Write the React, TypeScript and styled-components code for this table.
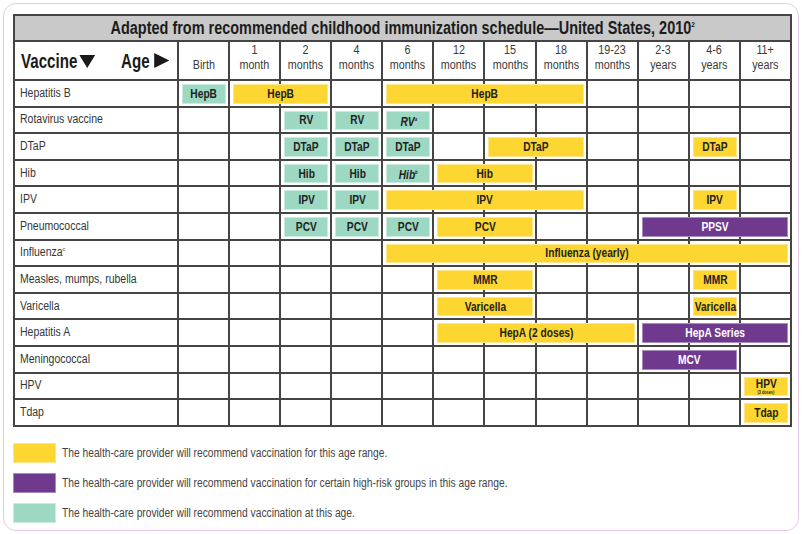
import styled, { createGlobalStyle } from "styled-components";

const GlobalStyle = createGlobalStyle`
  html, body {
    margin: 0;
    padding: 0;
    background: #ffffff;
  }
`;

type Kind = "range" | "risk" | "age";

type Bar = {
  col: number;
  span: number;
  kind: Kind;
  text: string;
  italic?: boolean;
  sup?: string;
  note?: string;
};

type VaccineRow = {
  label: string;
  sup?: string;
  bars: Bar[];
};

const ages: [string, string][] = [
  ["", "Birth"],
  ["1", "month"],
  ["2", "months"],
  ["4", "months"],
  ["6", "months"],
  ["12", "months"],
  ["15", "months"],
  ["18", "months"],
  ["19-23", "months"],
  ["2-3", "years"],
  ["4-6", "years"],
  ["11+", "years"],
];

const rows: VaccineRow[] = [
  {
    label: "Hepatitis B",
    bars: [
      { col: 0, span: 1, kind: "age", text: "HepB" },
      { col: 1, span: 2, kind: "range", text: "HepB" },
      { col: 4, span: 4, kind: "range", text: "HepB" },
    ],
  },
  {
    label: "Rotavirus vaccine",
    bars: [
      { col: 2, span: 1, kind: "age", text: "RV" },
      { col: 3, span: 1, kind: "age", text: "RV" },
      { col: 4, span: 1, kind: "age", text: "RV", italic: true, sup: "a" },
    ],
  },
  {
    label: "DTaP",
    bars: [
      { col: 2, span: 1, kind: "age", text: "DTaP" },
      { col: 3, span: 1, kind: "age", text: "DTaP" },
      { col: 4, span: 1, kind: "age", text: "DTaP" },
      { col: 6, span: 2, kind: "range", text: "DTaP" },
      { col: 10, span: 1, kind: "range", text: "DTaP" },
    ],
  },
  {
    label: "Hib",
    bars: [
      { col: 2, span: 1, kind: "age", text: "Hib" },
      { col: 3, span: 1, kind: "age", text: "Hib" },
      { col: 4, span: 1, kind: "age", text: "Hib", italic: true, sup: "b" },
      { col: 5, span: 2, kind: "range", text: "Hib" },
    ],
  },
  {
    label: "IPV",
    bars: [
      { col: 2, span: 1, kind: "age", text: "IPV" },
      { col: 3, span: 1, kind: "age", text: "IPV" },
      { col: 4, span: 4, kind: "range", text: "IPV" },
      { col: 10, span: 1, kind: "range", text: "IPV" },
    ],
  },
  {
    label: "Pneumococcal",
    bars: [
      { col: 2, span: 1, kind: "age", text: "PCV" },
      { col: 3, span: 1, kind: "age", text: "PCV" },
      { col: 4, span: 1, kind: "age", text: "PCV" },
      { col: 5, span: 2, kind: "range", text: "PCV" },
      { col: 9, span: 3, kind: "risk", text: "PPSV" },
    ],
  },
  {
    label: "Influenza",
    sup: "c",
    bars: [{ col: 4, span: 8, kind: "range", text: "Influenza (yearly)" }],
  },
  {
    label: "Measles, mumps, rubella",
    bars: [
      { col: 5, span: 2, kind: "range", text: "MMR" },
      { col: 10, span: 1, kind: "range", text: "MMR" },
    ],
  },
  {
    label: "Varicella",
    bars: [
      { col: 5, span: 2, kind: "range", text: "Varicella" },
      { col: 10, span: 1, kind: "range", text: "Varicella" },
    ],
  },
  {
    label: "Hepatitis A",
    bars: [
      { col: 5, span: 4, kind: "range", text: "HepA (2 doses)" },
      { col: 9, span: 3, kind: "risk", text: "HepA Series" },
    ],
  },
  {
    label: "Meningococcal",
    bars: [{ col: 9, span: 2, kind: "risk", text: "MCV" }],
  },
  {
    label: "HPV",
    bars: [{ col: 11, span: 1, kind: "range", text: "HPV", note: "(3 doses)" }],
  },
  {
    label: "Tdap",
    bars: [{ col: 11, span: 1, kind: "range", text: "Tdap" }],
  },
];

const fills: Record<Kind, { bg: string; edge: string; ink: string }> = {
  range: { bg: "#fed631", edge: "#fde58a", ink: "#222222" },
  risk: { bg: "#6f3a8e", edge: "#a98bc2", ink: "#ffffff" },
  age: { bg: "#9dd8c3", edge: "#c9ebdf", ink: "#222222" },
};

const legend: { kind: Kind; text: string }[] = [
  { kind: "range", text: "The health-care provider will recommend vaccination for this age range." },
  {
    kind: "risk",
    text: "The health-care provider will recommend vaccination for certain high-risk groups in this age range.",
  },
  { kind: "age", text: "The health-care provider will recommend vaccination at this age." },
];

// condensed face: Liberation Sans squeezed to the width of a narrow grotesque
const Narrow = styled.span<{ $scale?: number; $origin?: string }>`
  display: inline-block;
  white-space: nowrap;
  transform: scaleX(${(p) => p.$scale ?? 0.82});
  transform-origin: ${(p) => p.$origin ?? "center"};
`;

const Card = styled.div`
  box-sizing: border-box;
  margin: 3px 0 0 3px;
  width: 796px;
  height: 528px;
  border: 1px solid #e6c9e8;
  border-radius: 13px;
  padding: 10px 0 0 9px;
  font-family: "Liberation Sans", Arial, sans-serif;
`;

const Schedule = styled.div`
  display: grid;
  width: 779px;
  box-sizing: border-box;
  grid-template-columns: 162px repeat(12, minmax(0, 1fr));
  grid-template-rows: 24px 37px repeat(13, 24.6px);
  gap: 2px;
  padding: 2px;
  background: #454545;
  & > * {
    min-width: 0;
  }
`;

const TitleBar = styled.div`
  grid-column: 1 / -1;
  grid-row: 1;
  background: #c9c9c9;
  display: flex;
  align-items: center;
  justify-content: center;
  font-size: 17.5px;
  font-weight: 700;
  color: #1c1c1c;
  padding-top: 1px;
  sup {
    font-size: 8px;
    vertical-align: 7px;
  }
`;

const Corner = styled.div`
  grid-column: 1;
  grid-row: 2;
  background: #fff;
  display: flex;
  align-items: center;
  padding: 1px 0 0 6px;
  overflow: visible;
`;

const CornerText = styled.div`
  display: flex;
  align-items: center;
  justify-content: space-between;
  flex-shrink: 0;
  width: calc((100% - 8px) / 0.72);
  transform: scaleX(0.72);
  transform-origin: left center;
  font-weight: 700;
  font-size: 21px;
  color: #1a1a1a;
  white-space: nowrap;
  svg {
    fill: #1a1a1a;
    margin-left: 3px;
  }
`;

const AgeHead = styled.div<{ $col: number }>`
  grid-column: ${(p) => p.$col + 2};
  grid-row: 2;
  background: #fff;
  display: flex;
  flex-direction: column;
  align-items: center;
  justify-content: center;
  font-size: 12.5px;
  line-height: 15px;
  color: #3a3a3a;
  padding-bottom: 5px;
`;

const Label = styled.div<{ $row: number }>`
  grid-column: 1;
  grid-row: ${(p) => p.$row + 3};
  background: #fff;
  display: flex;
  align-items: center;
  padding: 0 0 1px 5px;
  font-size: 12.5px;
  color: #353535;
  sup {
    font-size: 6px;
    vertical-align: 5px;
  }
`;

const Cell = styled.div<{ $row: number; $col: number }>`
  grid-column: ${(p) => p.$col + 2};
  grid-row: ${(p) => p.$row + 3};
  background: #fff;
`;

const Pill = styled.div<{ $row: number; $col: number; $span: number; $kind: Kind; $italic?: boolean }>`
  grid-column: ${(p) => p.$col + 2} / span ${(p) => p.$span};
  grid-row: ${(p) => p.$row + 3};
  margin: 3px 2px 2px 3px;
  background: ${(p) => fills[p.$kind].bg};
  border: 1px solid ${(p) => fills[p.$kind].edge};
  color: ${(p) => fills[p.$kind].ink};
  display: flex;
  flex-direction: column;
  align-items: center;
  justify-content: center;
  font-size: 12px;
  font-weight: 700;
  font-style: ${(p) => (p.$italic ? "italic" : "normal")};
  line-height: 12px;
  z-index: 1;
  sup {
    font-size: 5px;
    vertical-align: 5px;
  }
`;

const Note = styled.span`
  font-size: 4.5px;
  line-height: 5px;
  font-weight: 700;
`;

const Legend = styled.div`
  display: flex;
  flex-direction: column;
  gap: 10px;
  margin-top: 16px;
`;

const LegendRow = styled.div`
  display: flex;
  align-items: center;
  gap: 6px;
  font-size: 12.5px;
  color: #444;
`;

const Swatch = styled.div<{ $kind: Kind }>`
  width: 41px;
  height: 18px;
  flex-shrink: 0;
  background: ${(p) => fills[p.$kind].bg};
  border: 1px solid ${(p) => fills[p.$kind].edge};
`;

export default function App() {
  return (
    <>
      <GlobalStyle />
      <Card>
        <Schedule>
          <TitleBar>
            <Narrow $scale={0.826}>
              Adapted from recommended childhood immunization schedule—United States, 2010<sup>2</sup>
            </Narrow>
          </TitleBar>
          <Corner>
            <CornerText>
              <span>
                Vaccine
                <svg width="22" height="14" viewBox="0 0 22 14">
                  <polygon points="0,1 22,1 11,14" />
                </svg>
              </span>
              <span>
                Age
                <svg width="24" height="15" viewBox="0 0 24 15">
                  <polygon points="3,0 24,7.5 3,15" />
                </svg>
              </span>
            </CornerText>
          </Corner>
          {ages.map(([top, bottom], i) => (
            <AgeHead key={i} $col={i}>
              <Narrow $scale={0.86}>{top || "\u00a0"}</Narrow>
              <Narrow $scale={0.86}>{bottom}</Narrow>
            </AgeHead>
          ))}
          {rows.map((row, r) => (
            <Label key={`l${r}`} $row={r}>
              <Narrow $scale={0.84} $origin="left">
                {row.label}
                {row.sup && <sup>{row.sup}</sup>}
              </Narrow>
            </Label>
          ))}
          {rows.map((_, r) =>
            ages.map((__, c) => <Cell key={`c${r}-${c}`} $row={r} $col={c} />)
          )}
          {rows.map((row, r) =>
            row.bars.map((b, i) => (
              <Pill
                key={`b${r}-${i}`}
                $row={r}
                $col={b.col}
                $span={b.span}
                $kind={b.kind}
                $italic={b.italic}
              >
                <Narrow $scale={0.85}>
                  {b.text}
                  {b.sup && <sup>{b.sup}</sup>}
                </Narrow>
                {b.note && (
                  <Note>
                    <Narrow $scale={0.85}>{b.note}</Narrow>
                  </Note>
                )}
              </Pill>
            ))
          )}
        </Schedule>
        <Legend>
          {legend.map((l) => (
            <LegendRow key={l.kind}>
              <Swatch $kind={l.kind} />
              <Narrow $scale={0.82} $origin="left">
                {l.text}
              </Narrow>
            </LegendRow>
          ))}
        </Legend>
      </Card>
    </>
  );
}
